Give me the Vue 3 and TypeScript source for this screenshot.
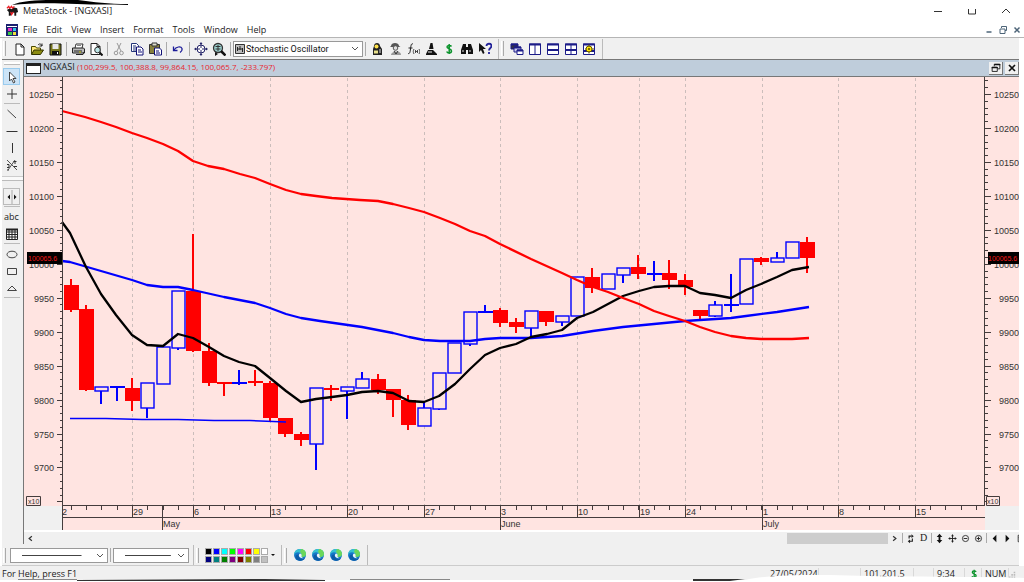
<script setup lang="ts">
interface Candle {
  up: boolean
  top: number
  bottom: number
  high: number
  low: number
}
interface Tool {
  icon: string
  label: string
}

const glyphs: Record<string, string> = {
  new: '<path d="M4 2h5l3 3v8H4z" fill="#fff" stroke="#222"/><path d="M9 2v3h3" fill="none" stroke="#222"/>',
  open: '<path d="M1.500 12V4.500h4l1 1.500h4V8" fill="#ffe97a" stroke="#4a4a00"/><path d="M1.500 12.500L4 8h9.500l-3 4.500z" fill="#8c8c10" stroke="#333300"/><path d="M8 3c2-2 3-1 4 1m0 0V1.500M12 4H9.500" fill="none" stroke="#222"/>',
  save: '<path d="M2 2h11v11H2z" fill="#77771c" stroke="#111"/><path d="M4.500 2h6v5h-6z" fill="#e8e8e8"/><path d="M4 9h7v4H4z" fill="#111"/><path d="M9 10h1v2H9z" fill="#fff"/>',
  print: '<path d="M4 6l1-4h7l-1 4" fill="#fff" stroke="#333"/><path d="M1.500 6h11l1 1v4h-12z" fill="#bbb" stroke="#222"/><path d="M3 9h8M5 12.500h7L13 10" stroke="#222" fill="none"/><path d="M6 3.500h4" stroke="#888"/><path d="M8 10h2" stroke="#cc0"/>',
  preview: '<path d="M2 1.500h6l3 3v8H2z" fill="#fff" stroke="#222"/><path d="M8 1.500v3h3" fill="none" stroke="#222"/><circle cx="8.500" cy="8" r="2.800" fill="#bde7e7" stroke="#333"/><path d="M10.500 10.500l3 3" stroke="#111" stroke-width="2"/>',
  cut: '<path d="M5 1l4 8M9 1L5 9" stroke="#999" fill="none"/><circle cx="4" cy="11" r="1.800" fill="none" stroke="#999"/><circle cx="9.500" cy="11" r="1.800" fill="none" stroke="#999"/>',
  copy: '<path d="M1.500 1.500h5l2 2v6h-7z" fill="#fff" stroke="#223377"/><path d="M3 4h3M3 6h4M3 8h3" stroke="#223377"/><path d="M6.500 5h4.500l2 2v6H6.500z" fill="#fff" stroke="#111177"/><path d="M8 8h3M8 10h4" stroke="#111177"/>',
  paste: '<path d="M1.500 2.500h10v9h-10z" fill="#87803c" stroke="#333"/><path d="M4 1h5v3H4z" fill="#ddc" stroke="#333"/><path d="M6.500 6h5l2 2v5h-7z" fill="#fff" stroke="#111177"/><path d="M8 9h3M8 11h4" stroke="#111177"/>',
  undo: '<path d="M2.500 4.500v4h4" fill="none" stroke="#1c1c99" stroke-width="1.300"/><path d="M3 8C5 4.500 10 4 11 6.500c.5 2-.5 3-2 4" fill="none" stroke="#1c1c99" stroke-width="1.200"/>',
  target: '<circle cx="7" cy="7" r="4" fill="#fff" stroke="#222266"/><path d="M7 1v5M7 8v5M1 7h5M8 7h5" stroke="#222266"/><path d="M7 0l1.500 2h-3zM7 14l1.500-2h-3zM0 7l2-1.500v3zM14 7l-2-1.500v3z" fill="#222266"/>',
  magnify: '<circle cx="6" cy="6" r="4.500" fill="#9cd2d0" stroke="#333" stroke-width="1.300"/><path d="M3.500 4.500h5M3.500 7h5M6 3v6" stroke="#333"/><path d="M9 9l4.500 4.500" stroke="#111" stroke-width="2.500"/><path d="M3 10v4l3-2z" fill="#111"/>',
  expert: '<path d="M4 4c0-4 6-4 6 0l2 3v6H3V7z" fill="#222"/><circle cx="6.500" cy="4.500" r="2" fill="#ffe14a"/><path d="M4 8.500h4v3H4z" fill="#e8e08a"/><path d="M9 8h2M9 10h2" stroke="#ddd"/>',
  person: '<path d="M3 4c0-4 8-4 8 0l1.500 1H2z" fill="#555"/><circle cx="7.500" cy="6" r="2.300" fill="#ddd" stroke="#555"/><path d="M3 13c0-4 10-5 10 0z" fill="#999"/><path d="M6 9l2 3 2-3" stroke="#333" fill="none"/>',
  fx: '<path d="M7 2C5 1 5 4 4.500 7S4 12 2 11.500M2.500 6H6.500" stroke="#222" fill="none"/><path d="M8 7c-1 2-1 3 0 5M13 7c1 2 1 3 0 5M9.500 8v3M11.500 8v3M9.500 9.500h2" stroke="#222" fill="none" stroke-width=".8"/>',
  scope: '<path d="M6.500 1h2l1 6H5zM4 8h5l4 4v1H2v-1z" fill="#111"/><path d="M4 10h4" stroke="#eee" fill="none"/>',
  dollar: '<path d="M9.500 4.500C8.500 3 5 3 5 5s4.500 1.500 4.500 4-4 2.500-4.800.5M7.200 2v10" stroke="#0a932b" fill="none" stroke-width="1.500"/>',
  binoc: '<path d="M3 2h3v3h2V2h3l2 6v4H8V8H6v4H1V8z" fill="#111"/><path d="M3 8v2M10 8v2" stroke="#ddd"/>',
  help: '<path d="M1 1v9l2-2 2 4 1.500-1L5 7h3z" fill="#111"/><path d="M8.500 4c0-3 5-3 5 0 0 2-2.500 2-2.500 4.500M11 10v2" fill="none" stroke="#222299" stroke-width="1.800"/>',
  cascade: '<path d="M1 2h7v5H1z" fill="#334" stroke="#1c1c88"/><path d="M4 5h7v5H4z" fill="#cce" stroke="#1c1c88"/><path d="M7 8h6v4.500H7z" fill="#fff" stroke="#1c1c88"/><path d="M1 2.500h7M4 5.500h7M7 8.500h6" stroke="#1c1c88" stroke-width="2"/>',
  cols: '<path d="M1.500 2h11v10.500h-11zM7 2v10" fill="#fff" stroke="#1c1c88"/><path d="M1 2.500h12" stroke="#1c1c88" stroke-width="2"/>',
  rows: '<path d="M1.500 2h11v10.500h-11z" fill="#fff" stroke="#1c1c88"/><path d="M1 2.500h12M1 8h12" stroke="#1c1c88" stroke-width="2"/>',
  tile: '<path d="M1.500 2h11v10.500h-11zM7 2v10" fill="#fff" stroke="#1c1c88"/><path d="M1 2.500h12M1 8h12" stroke="#1c1c88" stroke-width="2"/>',
  layout: '<path d="M1.500 2h11v10.500h-11z" fill="#fff" stroke="#1c1c88"/><path d="M1 2.500h12M1 9h12" stroke="#1c1c88" stroke-width="2"/><circle cx="7" cy="7" r="3" fill="#ffe600" stroke="#665500"/><path d="M7 2.500v2M7 9.500v2M3 7h1M10 7h2" stroke="#665500"/><circle cx="7" cy="7" r="1" fill="#554400"/>',
  pointer: '<path d="M4.500 2v9l2-2 2 4 1.500-1-2-3.500h3z" fill="#fff" stroke="#333" stroke-width=".9"/>',
  plus: '<path d="M7 2v10M2 7h10" stroke="#333"/>',
  diag: '<path d="M2.500 3l8.500 8" stroke="#444"/>',
  hline: '<path d="M1.500 7.500h11" stroke="#333"/>',
  vline: '<path d="M7.500 2v10" stroke="#333"/>',
  trend: '<path d="M2 2l10 10M3 12L10 2" stroke="#555"/><path d="M2 6.500h2v3H2M2 12h2M8.500 3.500h3M10 3v3M9 8.500h3" stroke="#333" fill="none"/>',
  updown: '<path d="M7 0v14" stroke="#aaa"/><path d="M2.500 7L5 4.500v5zM11.500 7L9 4.500v5z" fill="#111"/>',
  grid: '<path d="M1.500 2.500h11v10h-11zM1.500 5h11M1.500 7.500h11M1.500 10h11M4 3v9M7 3v9M10 3v9" stroke="#222" fill="#fff"/><path d="M1 2.500h12" stroke="#222" stroke-width="2"/>',
  ellipse: '<ellipse cx="7" cy="7.500" rx="5" ry="3.300" stroke="#444" fill="none"/>',
  rect: '<path d="M2.500 4.500h9v6h-9z" stroke="#444" fill="none"/>',
  tri: '<path d="M7 5l4.500 4.500h-9z" stroke="#444" fill="none"/>',
  refresh: '<path d="M5.500 7V4.500H8M9 7v3H6" stroke="#222" fill="none" stroke-width="1.200"/><path d="M8 2.500l2.500 2-2.500 2zM6.500 8L4 10l2.500 2z" fill="#222"/>',
  vsize: '<path d="M7 2l3 3.500H8v3h2L7 12 4 8.500h2v-3H4z" fill="#111"/>',
  move: '<path d="M7 3v8M3 7h8" stroke="#222"/><path d="M7 2.500l1.500 2h-3zM7 11.500l1.500-2h-3zM2.500 7l2-1.500v3zM11.500 7l-2-1.500v3z" fill="#222"/>',
  zout: '<circle cx="7" cy="7" r="3.300" fill="none" stroke="#333"/><path d="M5 7h4" stroke="#222"/>',
  zin: '<circle cx="7" cy="7" r="3.300" fill="none" stroke="#333"/><path d="M5 7h4M7 5v4" stroke="#222"/>',
  prev: '<path d="M9 3v8L5 7z" fill="#111"/>',
  next: '<path d="M5 3v8l4-4z" fill="#111"/>',
  less: '<path d="M8.500 4.500L5.500 7l3 2.500" fill="none" stroke="#333" stroke-width="1.300"/>',
  more: '<path d="M5.500 4.500l3 2.500-3 2.500" fill="none" stroke="#333" stroke-width="1.300"/>',
  page: '<path d="M9.500 3.500h-5v7h5M5 6h4" fill="none" stroke="#333"/>',
  edge: '<circle cx="7" cy="7" r="6" fill="#1577c8"/><path d="M1 7C1 3 4 1 7 1c4 0 6 2.500 6 5 0 2-1.500 3-3.500 3C8 9 8 8 8.500 7 8 4 3 3 1 7z" fill="#35bfd0"/><path d="M8 1c3 0 5 2.500 5 5 0 2-1.500 3-3.500 3C8 9 8 8 8.500 7c0-1.500-.5-2-1.500-3z" fill="#6bd65a"/><path d="M6 6.500C5 10 8 12 12 10 10 14 4 13 2.500 10 2 8 3.500 6 6 6.500z" fill="#0d5aa6"/><path d="M7.500 5.500c-3 .5-2 5.500 4 4.500-3 0-3.500-1.500-2.700-3z" fill="#f0f4f8"/>',
  min: '<path d="M3 7.500h8" stroke="#333"/>',
  max: '<path d="M3.500 5v5h7V5" stroke="#333" fill="none"/>',
  close: '<path d="M3 9l4-4 4 4" stroke="#333" fill="none"/>',
  smallmin: '<path d="M4.500 9h5" stroke="#4d6478" stroke-width="1.500"/>',
  restore: '<path d="M5.500 5V3.500h5v4H9M4 6h5v4.500H4z" stroke="#4d6478" fill="none"/>',
  smallx: '<path d="M4.500 4.500l5 5M9.500 4.500l-5 5" stroke="#4d6478" stroke-width="1.500"/>',
  restoreDark: '<path d="M5 5V2.500h6.500V8H9M2.500 6h6v5h-6z" stroke="#111" fill="none"/><path d="M5 3h7M2 6.500h7" stroke="#111" stroke-width="1.500"/>',
  xDark: '<path d="M3.500 3.500l7 7M10.500 3.500l-7 7" stroke="#111" stroke-width="2"/>',
}

const tool = (icon: string, label: string): Tool => ({ icon, label })

const fileTools: Tool[][] = [
  [tool('new', 'New'), tool('open', 'Open'), tool('save', 'Save')],
  [tool('print', 'Print'), tool('preview', 'Print preview')],
  [tool('cut', 'Cut'), tool('copy', 'Copy'), tool('paste', 'Paste')],
  [tool('undo', 'Undo')],
  [tool('target', 'Choose default'), tool('magnify', 'Zoom')],
]
const analysisTools = [
  tool('expert', 'Expert Advisor'), tool('person', 'Commentary'), tool('fx', 'Indicator Builder'),
  tool('scope', 'Explorer'), tool('dollar', 'System Tester'), tool('binoc', 'Find'), tool('help', 'Context help'),
]
const windowTools = [
  tool('cascade', 'Cascade'), tool('cols', 'Columns'), tool('rows', 'Rows'), tool('tile', 'Tile'), tool('layout', 'Layout'),
]
const sideGroups: Tool[][] = [
  [tool('pointer', 'Select'), tool('plus', 'Crosshair')],
  [tool('diag', 'Trendline'), tool('hline', 'Horizontal line'), tool('vline', 'Vertical line'), tool('trend', 'Studies')],
  [tool('updown', 'Buy and sell symbols')],
  [tool('abc', 'Text'), tool('grid', 'Grid')],
  [tool('ellipse', 'Ellipse'), tool('rect', 'Rectangle'), tool('tri', 'Triangle')],
]
const menus = ['File', 'Edit', 'View', 'Insert', 'Format', 'Tools', 'Window', 'Help']
const swatches = [
  '#000000', '#0000ff', '#00ffff', '#00ff00', '#ff00ff', '#ff0000', '#ffff00', '#ffffff',
  '#000080', '#008080', '#008000', '#800080', '#800000', '#808000', '#808080', '#c0c0c0',
]

const c = (up: number, top: number, bottom: number, high = top, low = bottom): Candle => ({ up: up === 1, top, bottom, high, low })
const candles: Candle[] = [
  c(0, 285, 310, 279, 312), c(0, 309, 390, 305, 391), c(1, 387, 391, 387, 404), c(1, 386, 388, 386, 401),
  c(0, 388, 401, 378, 411), c(1, 383, 408, 383, 418), c(1, 347, 384), c(1, 291, 348, 291, 350),
  c(0, 291, 351, 234, 352), c(0, 351, 383, 343, 386), c(0, 382, 383, 382, 396), c(1, 382, 384, 370, 385),
  c(0, 381, 383, 370, 386), c(0, 383, 418, 381, 421), c(0, 418, 434, 418, 437), c(0, 434, 440, 432, 446),
  c(1, 388, 444, 388, 470), c(0, 388, 390, 385, 401), c(1, 387, 391, 387, 419), c(1, 379, 388, 372, 388),
  c(0, 379, 390, 374, 394), c(0, 389, 400, 389, 417), c(0, 400, 425, 395, 430), c(1, 408, 426, 401, 426),
  c(1, 373, 409, 373, 410), c(1, 343, 373), c(1, 312, 344, 312, 346), c(1, 311, 313, 305, 313),
  c(0, 310, 323, 308, 327), c(0, 322, 327, 318, 333), c(1, 311, 328, 311, 337), c(0, 311, 322, 311, 326),
  c(1, 316, 322, 316, 326), c(1, 277, 316), c(0, 277, 288, 268, 293), c(1, 274, 289),
  c(1, 268, 275, 268, 283), c(0, 267, 274, 255, 279), c(1, 273, 274, 261, 281), c(0, 273, 280, 260, 289),
  c(0, 280, 287, 274, 295), c(0, 310, 316, 310, 319), c(1, 305, 316, 301, 317), c(1, 304, 305, 274, 312),
  c(1, 259, 304), c(0, 258, 262, 257, 265), c(1, 258, 262, 252, 262), c(1, 242, 258), c(0, 242, 258, 237, 273),
]
const STEP = 15.35
const barX = (i: number) => Math.round(70.5 + i * STEP)

const redLine = '62,111 85,117 101,122 116,127 132,133 147,138 163,144 178,151 193,161 208,166 224,169 240,174 255,178 270,184 286,190 301,194 316,196 332,198 360,200 378,201 393,204 409,208 424,212 440,218 455,224 470,231 485,236 500,244 531,259 562,273 577,280 593,287 608,292 623,298 639,304 654,311 669,316 685,321 700,327 715,332 731,336 746,338 761,339 777,339 792,339 809,338'
const blueLine = '62,261 70,262 101,271 132,280 147,285 163,287 178,287 193,290 224,297 255,303 270,308 286,314 301,318 320,321 362,327 393,333 409,337 424,340 440,341 470,341 485,339 500,338 531,338 562,336 593,331 623,327 654,324 685,321 700,320 731,318 746,316 777,312 809,307'
const blackLine = '62,222 70,233 86,267 101,294 116,315 132,335 147,345 163,346 178,334 193,338 209,347 224,356 239,362 255,366 270,378 286,391 301,402 316,399 332,397 347,395 362,392 378,391 393,393 409,401 424,402 439,396 455,384 470,369 485,355 500,348 516,344 531,337 547,334 562,330 577,318 593,312 608,304 623,296 639,291 654,287 669,286 685,286 700,293 715,295 731,298 746,290 761,284 777,277 792,270 809,267'

const prices = [10250, 10200, 10150, 10100, 10050, 10000, 9950, 9900, 9850, 9800, 9750, 9700]
const priceY = (p: number) => 94 + (10250 - p) * 0.679
const ticks = Array.from({ length: 63 }, (_, i) => {
  const p = 10270 - i * 10
  return { y: Math.round(priceY(p)), major: p % 50 === 0 }
})
const dayTicks = Array.from({ length: 60 }, (_, i) => barX(i))
const weeks = [
  { x: 132, d: '29' }, { x: 193, d: '6' }, { x: 270, d: '13' }, { x: 347, d: '20' }, { x: 424, d: '27' }, { x: 500, d: '3' },
  { x: 577, d: '10' }, { x: 639, d: '19' }, { x: 685, d: '24' }, { x: 762, d: '1' }, { x: 838, d: '8' }, { x: 915, d: '15' },
]
const months = [{ x: 162, m: 'May' }, { x: 500, m: 'June' }, { x: 762, m: 'July' }]
</script>

<template>
  <div class="app">
    <header class="title">
      <svg class="logo" viewBox="0 0 14 12"><path d="M1 5l3-2 2 1 2-2 4 1 1 4-2 1v3h-2V8H6l-1 3H3V7z" fill="#171717" /><path d="M1 3l2-2 1 2 2-2 1 2 2-2M5 7l1 3 2-3" stroke="#ee1c24" fill="none" stroke-width="1.300" /></svg>
      <h1>MetaStock - [NGXASI]</h1>
      <div class="caption">
        <button v-for="k in ['min', 'max', 'close']" :key="k" :aria-label="k"><svg viewBox="0 0 14 14" v-html="glyphs[k]" /></button>
      </div>
      <svg class="stroke-top" viewBox="0 0 116 6"><path d="M0 5C8 1 25 0 40 0h26c16 2 30 4 50 4v1C96 4 85 5 65 4 40 3 18 3 0 5z" fill="#000" /></svg>
    </header>

    <nav class="menu">
      <svg class="doc" viewBox="0 0 12 12"><path d="M0 0h12v12H0z" fill="#1b2170" /><path d="M1 2h10v1H1z" fill="#fff" /><path d="M2 4h4v3H2z" fill="#e82cc0" /><path d="M7 4h3v3H7z" fill="#34c6e8" /><path d="M2 8h4v3H2z" fill="#3cc844" /><path d="M7 8h3v3H7z" fill="#f0e03a" /></svg>
      <button v-for="m in menus" :key="m">{{ m }}</button>
      <div class="mdi">
        <button v-for="k in ['smallmin', 'restore', 'smallx']" :key="k" :aria-label="k"><svg viewBox="0 0 14 14" v-html="glyphs[k]" /></button>
      </div>
    </nav>

    <div class="bar top">
      <i class="grip" />
      <template v-for="(g, gi) in fileTools" :key="gi">
        <button v-for="t in g" :key="t.icon" class="tool" :aria-label="t.label"><svg viewBox="0 0 14 14" v-html="glyphs[t.icon]" /></button>
        <i class="sep" />
      </template>
      <div class="combo">
        <svg class="lead" viewBox="0 0 10 10"><path d="M.5 .5h9v9h-9z" fill="#bbb" stroke="#333" /><path d="M2.500 3v4M5 2v4M7.500 4v4M2 5h6" stroke="#222" fill="none" /></svg>
        <select aria-label="Indicator"><option>Stochastic Oscillator</option></select>
        <svg class="chev" viewBox="0 0 8 6"><path d="M1 1l3 3 3-3" fill="none" stroke="#555" /></svg>
      </div>
      <i class="sep" />
      <button v-for="t in analysisTools" :key="t.icon" class="tool" :aria-label="t.label"><svg viewBox="0 0 14 14" v-html="glyphs[t.icon]" /></button>
      <i class="edge" /><i class="grip" />
      <button v-for="t in windowTools" :key="t.icon" class="tool" :aria-label="t.label"><svg viewBox="0 0 14 14" v-html="glyphs[t.icon]" /></button>
      <i class="edge" />
    </div>

    <main class="work">
      <aside class="side">
        <i class="hgrip" />
        <template v-for="(g, gi) in sideGroups" :key="gi">
          <i v-if="gi === 2" class="split" />
          <i v-else-if="gi" class="hsep" />
          <button v-for="t in g" :key="t.icon" :class="{ on: t.icon === 'pointer', boxed: t.icon === 'updown' }" :aria-label="t.label">
            <span v-if="t.icon === 'abc'">abc</span>
            <svg v-else viewBox="0 0 14 14" v-html="glyphs[t.icon]" />
          </button>
        </template>
        <i class="hsep" />
      </aside>

      <section class="pane">
        <div class="head">
          <i class="win" />
          <h2>NGXASI <span>(100,299.5, 100,388.8, 99,864.15, 100,065.7, -233.797)</span></h2>
          <button aria-label="Restore chart"><svg viewBox="0 0 14 14" v-html="glyphs.restoreDark" /></button>
          <button aria-label="Close chart"><svg viewBox="0 0 14 14" v-html="glyphs.xDark" /></button>
        </div>

        <svg class="chart" viewBox="24 77 995 455" role="img" aria-label="NGXASI candlestick chart">
          <path d="M24 77h995v429H985v24H62v-24H24z" fill="#ffe4e1" />
          <path d="M24 530h995v2H24z" fill="#fff" />
          <g class="dash"><path v-for="w in weeks" :key="w.x" :d="`M${w.x}.5 78V505`" /></g>

          <g class="candles">
            <g v-for="(k, i) in candles" :key="i" :class="k.up ? 'up' : 'down'">
              <rect class="wick" :x="barX(i) - 1" :y="k.high" width="2" :height="k.low - k.high" />
              <rect v-if="k.up && k.bottom - k.top > 2" class="hollow" :x="barX(i) - 6" :y="k.top" width="13" :height="k.bottom - k.top" />
              <rect v-else :x="barX(i) - 7" :y="k.top" width="15" :height="Math.max(2, k.bottom - k.top)" />
            </g>
          </g>
          <path d="M70 418.500H106L142 419.500H178L214 420.500H250L286 422" class="trend" />
          <polyline :points="blueLine" class="ma blue" />
          <polyline :points="blackLine" class="ma" />
          <polyline :points="redLine" class="ma red" />

          <g class="axis">
            <path d="M62.500 77V530M984.500 77V506M62 505.500H985M62 517.500H985" />
            <path v-for="(t, i) in ticks" :key="i" :d="`M${t.major ? 57 : 60} ${t.y}.5H62M985 ${t.y}.5H${t.major ? 991 : 988}`" />
            <path v-for="x in dayTicks" :key="x" :d="`M${x}.5 506v4`" />
            <path v-for="w in weeks" :key="w.x" :d="`M${w.x}.5 506v12`" />
            <path v-for="m in months" :key="m.m" :d="`M${m.x}.5 506v24`" />
            <path d="M26.500 496.500h14v9h-14zM986.500 496.500h13v9h-13z" fill="#ffe4e1" />
          </g>
          <g class="num">
            <template v-for="p in prices" :key="p">
              <text x="54" :y="Math.round(priceY(p)) + 4" text-anchor="end">{{ p }}</text>
              <text x="1019" :y="Math.round(priceY(p)) + 4" text-anchor="end">{{ p }}</text>
            </template>
            <text x="62" y="515">2</text>
            <text v-for="w in weeks" :key="w.x" :x="w.x + 1" y="515">{{ w.d }}</text>
            <text v-for="m in months" :key="m.m" :x="m.x + 1" y="527">{{ m.m }}</text>
            <text x="28" y="504" class="tiny">x10</text>
            <text x="987" y="504" class="tiny">x10</text>
          </g>
          <path d="M27 252h35v12H27zM988 252h31v12h-31z" fill="#000" />
          <text class="last" x="28" y="261">100065.6</text>
          <text class="last" x="988" y="261">100065.6</text>
        </svg>

        <div class="scroll">
          <button aria-label="Scroll left"><svg viewBox="0 0 14 14" v-html="glyphs.less" /></button>
          <div class="track"><div class="thumb" /></div>
          <button aria-label="Scroll right"><svg viewBox="0 0 14 14" v-html="glyphs.more" /></button>
          <i class="vsep" />
          <button aria-label="Refresh"><svg viewBox="0 0 14 14" v-html="glyphs.refresh" /></button>
          <button class="letter">D</button>
          <i class="vsep" />
          <button v-for="k in ['vsize', 'move', 'zout', 'zin']" :key="k" :aria-label="k"><svg viewBox="0 0 14 14" v-html="glyphs[k]" /></button>
          <i class="vsep" />
          <button v-for="k in ['prev', 'next', 'page']" :key="k" :aria-label="k"><svg viewBox="0 0 14 14" v-html="glyphs[k]" /></button>
        </div>
      </section>
    </main>

    <div class="bar bottom">
      <i class="grip" />
      <div class="combo line long">
        <select aria-label="Line style"><option /></select>
        <svg class="chev" viewBox="0 0 8 6"><path d="M1 1l3 3 3-3" fill="none" stroke="#555" /></svg>
      </div>
      <i class="sep" />
      <div class="combo line short">
        <select aria-label="Line weight"><option /></select>
        <svg class="chev" viewBox="0 0 8 6"><path d="M1 1l3 3 3-3" fill="none" stroke="#555" /></svg>
      </div>
      <i class="edge" /><i class="grip" />
      <div class="palette">
        <button v-for="s in swatches" :key="s" :style="{ background: s }" :aria-label="s" />
      </div>
      <button class="drop" aria-label="More colors"><svg viewBox="0 0 6 4"><path d="M1 1h4L3 3z" fill="#111" /></svg></button>
      <i class="edge" /><i class="grip" />
      <button v-for="n in 4" :key="n" class="tool" :aria-label="`Web link ${n}`"><svg viewBox="0 0 14 14" v-html="glyphs.edge" /></button>
      <i class="edge" />
    </div>

    <footer class="status">
      <span class="msg">For Help, press F1</span>
      <span class="date">27/05/2024</span>
      <span class="gap1" />
      <span class="value">101,201.5</span>
      <span class="gap2" />
      <span class="time">9:34</span>
      <span class="cash"><svg viewBox="0 0 14 14" v-html="glyphs.dollar" /></span>
      <span class="lock">NUM</span>
      <svg class="size" viewBox="0 0 9 9"><path d="M6 1h2v2H6zM3 4h2v2H3zM6 4h2v2H6zM0 7h2v2H0zM3 7h2v2H3zM6 7h2v2H6z" fill="#bbb" /></svg>
      <svg class="stroke-bottom" viewBox="0 0 1024 8" preserveAspectRatio="none">
        <path d="M0 6H745C765 1 800 1 830 1C880 3 940 2 1024 4V8H0z" fill="#fff" />
        <path d="M18 5H77V6H18zM350 5H450V6H350z" fill="#888" />
        <path d="M77 6L265 5L325 6V7H77zM693 5H736L745 5L730 7H693z" fill="#333" />
      </svg>
    </footer>
  </div>
</template>

<style>
body { margin: 0; background: #fff; }
</style>

<style scoped>
.app { position: relative; font: 9px/12px "Open Sans", "Noto Sans", sans-serif; color: #222; background: #fff; overflow: hidden; }
button { border: 0; padding: 0; margin: 0; background: none; font: inherit; color: inherit; display: flex; align-items: center; justify-content: center; flex: none; }
svg { display: block; flex: none; }
i { display: block; flex: none; }
h1, h2 { margin: 0; font: inherit; white-space: nowrap; }
.title { display: flex; align-items: center; height: 22px; padding-left: 6px; gap: 4px; }
.logo { width: 13px; height: 12px; }
.stroke-top { position: absolute; left: 12px; top: 0; width: 116px; height: 6px; }
.caption { margin-left: auto; display: flex; gap: 20px; padding-right: 11px; }
.caption svg, .mdi svg { width: 14px; height: 14px; }
.menu { display: flex; align-items: center; height: 15px; padding-left: 6px; border-bottom: 1px solid #b5b5b5; }
.doc { width: 12px; height: 12px; margin-right: 5px; }
.menu > button { margin-right: 9px; }
.mdi { margin-left: auto; display: flex; }
.bar { display: flex; align-items: center; margin: 0 5px 0 2px; background: #f0f0f0; }
.top { height: 21px; border-bottom: 1px solid #777; }
.tool { width: 18px; height: 18px; }
.tool svg { width: 14px; height: 14px; }
.grip { width: 1px; height: 15px; margin: 0 4px 0 1px; border-right: 1px solid #aaa; border-left: 1px solid #fff; }
.sep { width: 1px; height: 14px; margin: 0 2px; background: #aaa; }
.edge { width: 1px; height: 20px; margin: 0 1px 0 4px; background: #bbb; }
.combo { position: relative; display: flex; align-items: center; width: 130px; height: 16px; border: 1px solid #999; background: #fff; box-sizing: border-box; }
.combo select { appearance: none; width: 100%; height: 14px; border: 0; padding: 0 12px 0 12px; margin: 0; background: transparent; font: 9px/14px Roboto, sans-serif; color: #111; outline: 0; }
.lead { position: absolute; left: 1px; top: 2px; width: 10px; height: 10px; }
.chev { position: absolute; right: 3px; top: 4px; width: 8px; height: 6px; }
.line { height: 15px; }
.long { width: 98px; }
.short { width: 76px; }
.combo.line select { background: linear-gradient(#444, #444) no-repeat 11px 50% / 62% 1px; }
.work { display: flex; margin: 0 5px 0 2px; background: #f0f0f0; }
.side { width: 21px; flex: none; border-right: 1px solid #777; padding: 0; background: #f0f0f0; }
.side button { width: 17px; height: 17px; margin-left: 1px; }
.side svg { width: 14px; height: 14px; }
.side .on { background: #cce4f7; box-shadow: inset 0 0 0 1px #99cbee; }
.side .boxed { box-shadow: inset 0 0 0 1px #bbb; }
.hgrip { height: 2px; margin: 2px 3px 3px 2px; border-bottom: 1px solid #bbb; background: #fff; }
.hsep { height: 1px; margin: 1px 3px 1px 2px; background: #bbb; }
.split { height: 3px; margin: 3px 0 7px; border-top: 1px solid #ccc; border-bottom: 1px solid #bbb; background: #fafafa; }
.pane { flex: 1; min-width: 0; overflow: hidden; }
.head { display: flex; align-items: center; height: 16px; padding: 0 0 0 2px; background: #bfcddb; border-bottom: 1px solid #777; }
.win { width: 13px; height: 7px; border: 1px solid #222; border-top-width: 3px; background: #fff; margin-right: 2px; }
.head h2 { flex: 1; line-height: 16px; height: 18px; }
.head h2 span { color: #e8262e; font-size: 8px; }
.head button { width: 14px; height: 13px; margin-left: 2px; background: #f0f0f0; border-right: 1px solid #777; border-bottom: 1px solid #777; }
.head button svg { width: 12px; height: 12px; }
.chart { width: 100%; height: auto; }
.dash path { stroke: #cbbdbb; stroke-dasharray: 3 3; fill: none; }
.up rect { fill: #00f; }
.up .hollow { fill: #ffe4e1; stroke: #00f; stroke-width: 1.400; }
.down rect { fill: #f00; }
.trend { stroke: #00f; stroke-width: 1.500; fill: none; }
.ma { fill: none; stroke: #000; stroke-width: 2.300; stroke-linejoin: round; }
.blue { stroke: #00f; }
.red { stroke: #f00; }
.axis path { stroke: #443c3c; }
.num text { font: 9px "Liberation Sans", sans-serif; fill: #333; }
.num .tiny { font-size: 7px; }
.last { font: 7px "Liberation Sans", sans-serif; fill: #f01818; }
.scroll { display: flex; align-items: center; height: 12px; margin-right: -8px; }
.scroll button { width: 13px; height: 12px; }
.scroll svg { width: 13px; height: 13px; }
.scroll .letter { font: 10px/12px "Liberation Serif", serif; }
.track { flex: 1; height: 11px; display: flex; justify-content: flex-end; }
.thumb { width: 101px; background: #cdcdcd; }
.vsep { width: 1px; height: 10px; margin: 0 1px; background: #aaa; }
.bottom { height: 20px; border-bottom: 1px solid #ccc; padding-top: 1px; }
.palette { display: grid; grid-template-columns: repeat(8, 7px); gap: 1px; margin-left: 2px; }
.palette button { height: 7px; border: 1px solid #aaa; box-sizing: border-box; }
.drop { width: 9px; height: 14px; }
.drop svg { width: 6px; height: 4px; }
.status { position: relative; display: flex; align-items: center; height: 16px; padding: 0 8px 0 2px; background: #f0f0f0; }
.status span { height: 12px; box-sizing: border-box; border-right: 1px solid #d8d8d8; white-space: nowrap; }
.status .msg { flex: 1; border: 0; }
.date { width: 49px; }
.gap1 { width: 42px; }
.value { width: 53px; padding-left: 3px; }
.gap2 { width: 20px; }
.time { width: 31px; padding-left: 3px; }
.cash { width: 17px; padding-left: 3px; }
.cash svg { width: 12px; height: 12px; }
.lock { width: 27px; padding-left: 3px; }
.size { width: 7px; height: 9px; }
.stroke-bottom { position: absolute; left: 0; bottom: 0; width: 100%; height: 8px; }
</style>
